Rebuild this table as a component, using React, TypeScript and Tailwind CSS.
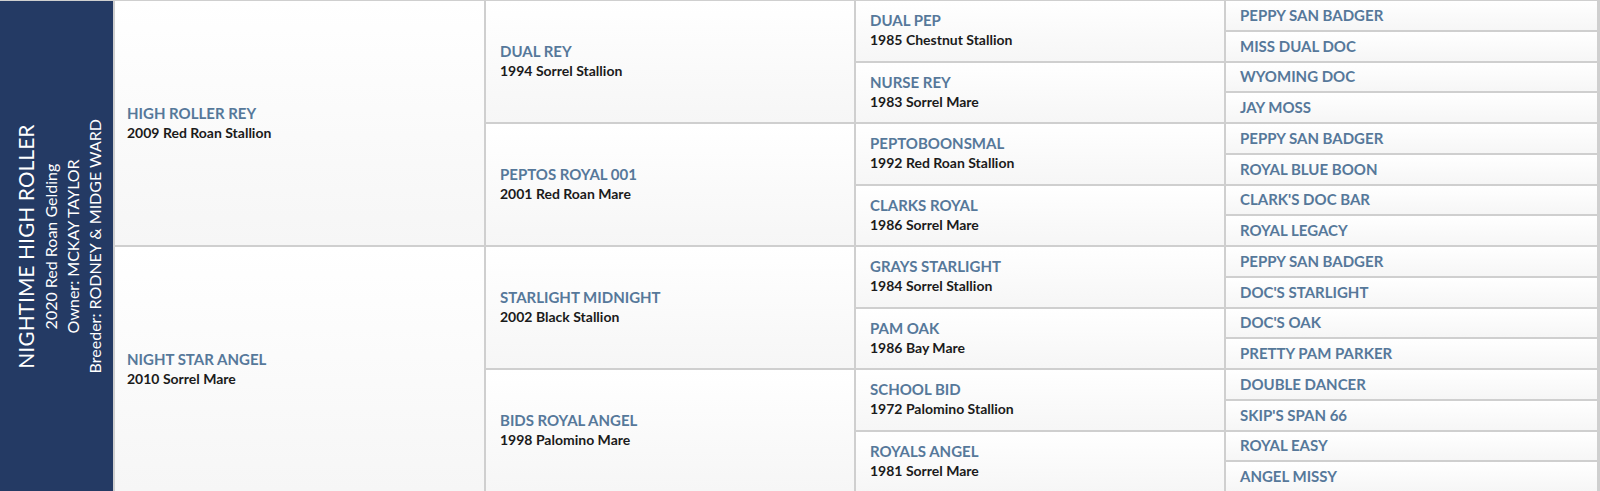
import React from 'react';

interface Horse {
  name: string;
  info?: string;
}

const sire: Horse[] = [
  { name: 'HIGH ROLLER REY', info: '2009 Red Roan Stallion' },
  { name: 'NIGHT STAR ANGEL', info: '2010 Sorrel Mare' },
];

const gen2: Horse[] = [
  { name: 'DUAL REY', info: '1994 Sorrel Stallion' },
  { name: 'PEPTOS ROYAL 001', info: '2001 Red Roan Mare' },
  { name: 'STARLIGHT MIDNIGHT', info: '2002 Black Stallion' },
  { name: 'BIDS ROYAL ANGEL', info: '1998 Palomino Mare' },
];

const gen3: Horse[] = [
  { name: 'DUAL PEP', info: '1985 Chestnut Stallion' },
  { name: 'NURSE REY', info: '1983 Sorrel Mare' },
  { name: 'PEPTOBOONSMAL', info: '1992 Red Roan Stallion' },
  { name: 'CLARKS ROYAL', info: '1986 Sorrel Mare' },
  { name: 'GRAYS STARLIGHT', info: '1984 Sorrel Stallion' },
  { name: 'PAM OAK', info: '1986 Bay Mare' },
  { name: 'SCHOOL BID', info: '1972 Palomino Stallion' },
  { name: 'ROYALS ANGEL', info: '1981 Sorrel Mare' },
];

const gen4: Horse[] = [
  { name: 'PEPPY SAN BADGER' },
  { name: 'MISS DUAL DOC' },
  { name: 'WYOMING DOC' },
  { name: 'JAY MOSS' },
  { name: 'PEPPY SAN BADGER' },
  { name: 'ROYAL BLUE BOON' },
  { name: "CLARK'S DOC BAR" },
  { name: 'ROYAL LEGACY' },
  { name: 'PEPPY SAN BADGER' },
  { name: "DOC'S STARLIGHT" },
  { name: "DOC'S OAK" },
  { name: 'PRETTY PAM PARKER' },
  { name: 'DOUBLE DANCER' },
  { name: "SKIP'S SPAN 66" },
  { name: 'ROYAL EASY' },
  { name: 'ANGEL MISSY' },
];

const Cell: React.FC<{ horse: Horse; first?: boolean }> = ({ horse, first }) => (
  <div
    className={`flex min-h-0 flex-col justify-center bg-linear-to-b from-white to-[#f6f6f6] ${first ? 'px-[12px]' : 'px-[14px]'}`}
  >
    <div className="text-[15px] font-bold leading-[19px] text-[#56789a]">{horse.name}</div>
    {horse.info && (
      <div className="text-[14px] font-bold leading-[20px] text-[#1b1b1b]">{horse.info}</div>
    )}
  </div>
);

export default function App() {
  return (
    <div
      className="flex h-[491px] w-[1600px] gap-[2px] overflow-hidden bg-[#cfcfcf] pt-[1px] pr-[3px]"
      style={{ fontFamily: 'Lato, "Open Sans", sans-serif' }}
    >
      <div className="flex w-[113px] shrink-0 items-center justify-center bg-[#243a64] pl-[6px] text-white">
        <div className="rotate-180 text-center [writing-mode:vertical-rl]">
          <div className="text-[20.5px] leading-[27px] tracking-[0.3px]">NIGHTIME HIGH ROLLER</div>
          <div className="text-[16px] leading-[22px]">2020 Red Roan Gelding</div>
          <div className="text-[16px] leading-[22px]">Owner: MCKAY TAYLOR</div>
          <div className="text-[16px] leading-[22px]">Breeder: RODNEY &amp; MIDGE WARD</div>
        </div>
      </div>
      <div className="grid w-[369px] shrink-0 grid-rows-2 gap-[2px]">
        {sire.map((h, i) => (
          <Cell key={i} horse={h} first />
        ))}
      </div>
      <div className="grid w-[368px] shrink-0 grid-rows-4 gap-[2px]">
        {gen2.map((h, i) => (
          <Cell key={i} horse={h} />
        ))}
      </div>
      <div className="grid w-[368px] shrink-0 grid-rows-8 gap-[2px]">
        {gen3.map((h, i) => (
          <Cell key={i} horse={h} />
        ))}
      </div>
      <div className="grid flex-1 grid-rows-16 gap-[2px]">
        {gen4.map((h, i) => (
          <Cell key={i} horse={h} />
        ))}
      </div>
    </div>
  );
}
